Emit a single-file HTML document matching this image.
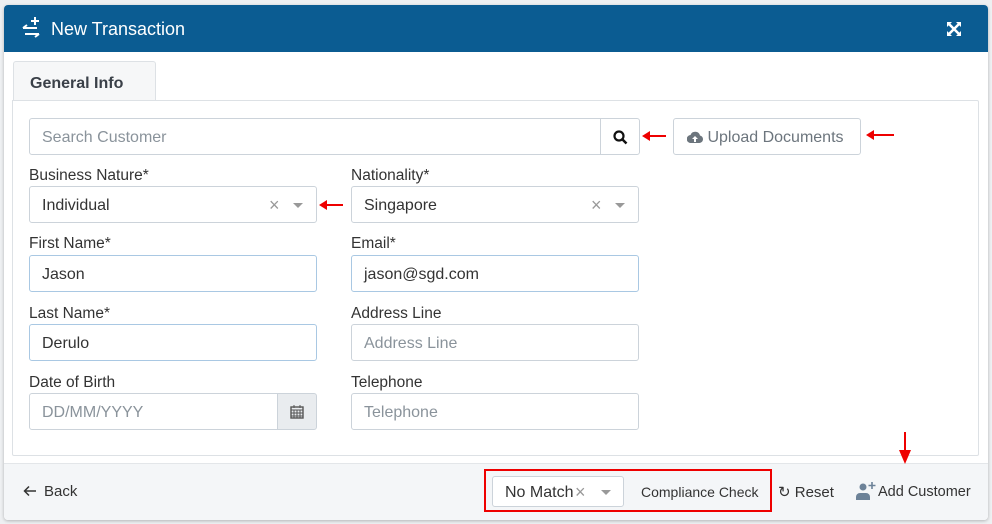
<!DOCTYPE html>
<html><head><style>
*{box-sizing:border-box;margin:0;padding:0}
body{width:992px;height:524px;background:#eef0f2;font-family:"Liberation Sans",sans-serif;position:relative;overflow:hidden;color:#333}
.a{position:absolute}
.panel{left:4px;top:5px;width:984px;height:515px;background:#fff;border-radius:4px;box-shadow:0 1px 3px rgba(0,0,0,.25);overflow:hidden}
.hdr{left:0;top:0;width:984px;height:47px;background:#0b5c92;color:#fff;font-size:18px}
.lbl{font-size:15.5px;color:#333}
.inp{border:1px solid #ccd3da;border-radius:3px;height:37px;font-size:16px;padding:0 12px;line-height:37px;color:#333;background:#fff}
.ph{color:#8a939b}
.foc{border-color:#a9c8e3}
.arr{position:absolute;height:2px;background:#e00}
.arr:before{content:"";position:absolute;left:-6px;top:-4px;border-right:8px solid #e00;border-top:5px solid transparent;border-bottom:5px solid transparent}
.x{position:absolute;color:#999;font-size:18px;top:0}
.dd{position:absolute;top:16px;border-top:5px solid #999;border-left:5px solid transparent;border-right:5px solid transparent}
</style></head><body>
<div class="a panel">
 <div class="a hdr">
  <svg class="a" style="left:17px;top:11px" width="22" height="22" viewBox="0 0 22 22"><g stroke="#fff" stroke-width="2" fill="none"><path d="M14 1v8M10 5h8"/><path d="M2 12h14M2 12l4-3"/><path d="M4 18h14M18 18l-4 3"/></g></svg>
  <div class="a" style="left:47px;top:14px">New Transaction</div>
  <svg class="a" style="left:943px;top:17px" width="14" height="14" viewBox="0 0 14 14"><g fill="#fff"><path d="M0 0h5L0 5z M14 0h-5l5 5z M0 14h5L0 9z M14 14h-5l5-5z"/></g><g stroke="#fff" stroke-width="2.5"><path d="M2 2l10 10M12 2L2 12"/></g></svg>
 </div>
 <div class="a" style="left:9px;top:56px;width:143px;height:40px;background:#f6f7f8;border:1px solid #dde1e5;border-bottom:none;border-radius:3px 3px 0 0;font-weight:bold;font-size:16px;color:#3a4048;padding:13px 0 0 16px">General Info</div>
 <div class="a" style="left:8px;top:95px;width:967px;height:356px;border:1px solid #dde1e5;border-radius:0 2px 2px 2px"></div>
 <div class="a" style="left:0;top:458px;width:984px;height:57px;background:#f4f6f8;border-top:1px solid #e3e6e9"></div>
</div>

<div class="a inp ph" style="left:29px;top:118px;width:572px;border-radius:3px 0 0 3px">Search Customer</div>
<div class="a inp" style="left:600px;top:118px;width:40px;border-radius:0 3px 3px 0"><svg class="a" style="left:12px;top:11px" width="15" height="15" viewBox="0 0 15 15"><circle cx="6" cy="6" r="4.5" stroke="#111" stroke-width="2.2" fill="none"/><path d="M9.5 9.5l4 4" stroke="#111" stroke-width="2.5"/></svg></div>
<div class="arr" style="left:648px;top:135px;width:18px"></div>
<div class="a inp" style="left:673px;top:118px;width:188px;color:#6c757d;font-size:16px;padding-left:13px"><svg style="vertical-align:-1px" width="16" height="12" viewBox="0 0 16 12"><path d="M4 12a4 4 0 0 1-.5-8A5 5 0 0 1 13 4.5 3.8 3.8 0 0 1 12.5 12z" fill="#6c757d"/><path d="M8 5l-3 3h2v3h2V8h2z" fill="#fff"/></svg> Upload Documents</div>
<div class="arr" style="left:872px;top:134px;width:22px"></div>

<div class="a lbl" style="left:29px;top:167px">Business Nature*</div>
<div class="a inp" style="left:29px;top:186px;width:288px">Individual<span class="x" style="left:239px;top:8px;line-height:20px">×</span><span class="dd" style="left:263px"></span></div>
<div class="arr" style="left:325px;top:204px;width:18px"></div>
<div class="a lbl" style="left:351px;top:167px">Nationality*</div>
<div class="a inp" style="left:351px;top:186px;width:288px">Singapore<span class="x" style="left:239px;top:8px;line-height:20px">×</span><span class="dd" style="left:263px"></span></div>

<div class="a lbl" style="left:29px;top:235px">First Name*</div>
<div class="a inp foc" style="left:29px;top:255px;width:288px">Jason</div>
<div class="a lbl" style="left:351px;top:235px">Email*</div>
<div class="a inp foc" style="left:351px;top:255px;width:288px">jason@sgd.com</div>

<div class="a lbl" style="left:29px;top:305px">Last Name*</div>
<div class="a inp foc" style="left:29px;top:324px;width:288px">Derulo</div>
<div class="a lbl" style="left:351px;top:305px">Address Line</div>
<div class="a inp ph" style="left:351px;top:324px;width:288px">Address Line</div>

<div class="a lbl" style="left:29px;top:374px">Date of Birth</div>
<div class="a inp ph" style="left:29px;top:393px;width:250px;border-radius:3px 0 0 3px">DD/MM/YYYY</div>
<div class="a inp" style="left:277px;top:393px;width:40px;background:#e9ecef;border-radius:0 3px 3px 0"><svg class="a" style="left:12px;top:10px" width="14" height="15" viewBox="0 0 14 15"><rect x="1" y="3" width="12" height="11" fill="none" stroke="#555" stroke-width="1.4"/><path d="M1 6h12M4 1v3M10 1v3M1 9h12M1 12h12M4 6v8M7 6v8M10 6v8" stroke="#555" stroke-width="1"/></svg></div>
<div class="a lbl" style="left:351px;top:374px">Telephone</div>
<div class="a inp ph" style="left:351px;top:393px;width:288px">Telephone</div>

<svg class="a" style="left:23px;top:485px" width="14" height="12" viewBox="0 0 14 12"><path d="M13 6H2M6 1.5L1.5 6 6 10.5" stroke="#333" stroke-width="1.5" fill="none"/></svg>
<div class="a" style="left:44px;top:483px;font-size:15px;color:#333">Back</div>
<div class="a" style="left:484px;top:469px;width:288px;height:43px;border:2px solid #e00"></div>
<div class="a inp" style="left:492px;top:476px;width:132px;height:31px;line-height:31px;font-size:16px">No Match<span class="x" style="left:82px;top:5px;line-height:20px">×</span><span class="dd" style="left:108px;top:13px"></span></div>
<div class="a" style="left:641px;top:484px;font-size:14px;color:#333">Compliance Check</div>
<div class="a" style="left:778px;top:483px;font-size:15px;color:#333">↻ Reset</div>
<svg class="a" style="left:856px;top:482px" width="20" height="18" viewBox="0 0 20 18"><circle cx="7" cy="5" r="3.5" fill="#6c8298"/><path d="M0 18v-3a4 4 0 0 1 4-4h6a4 4 0 0 1 4 4v3z" fill="#6c8298"/><path d="M16 0v7M12.5 3.5h7" stroke="#6c8298" stroke-width="1.6"/></svg>
<div class="a" style="left:878px;top:484px;font-size:14.5px;color:#333">Add Customer</div>
<div class="a" style="left:904px;top:432px;width:2px;height:20px;background:#e00"></div>
<div class="a" style="left:899px;top:450px;border-top:14px solid #e00;border-left:6px solid transparent;border-right:6px solid transparent"></div>
</body></html>
